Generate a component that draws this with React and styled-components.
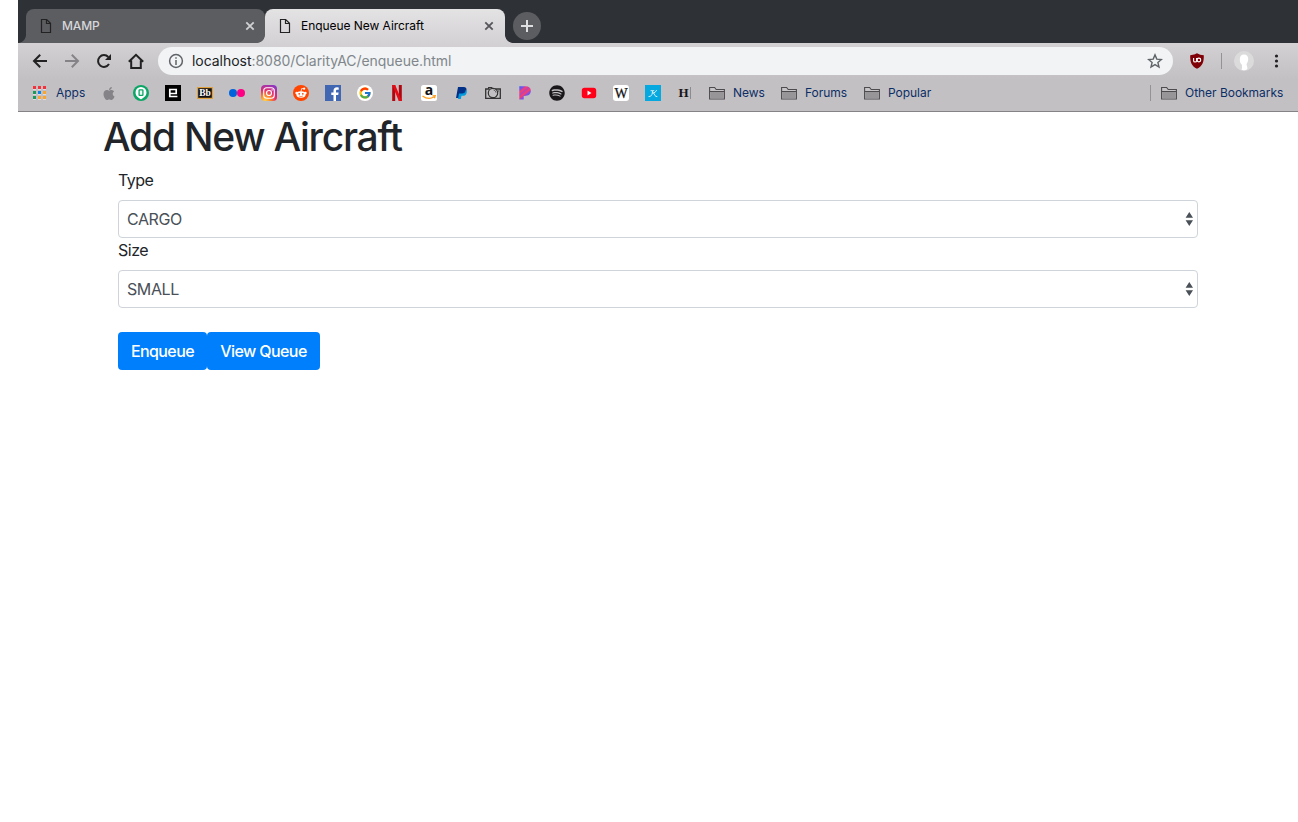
import React from "react";
import styled, { createGlobalStyle } from "styled-components";
import { FaApple, FaSpotify } from "react-icons/fa";
import { FcGoogle } from "react-icons/fc";

const GlobalStyle = createGlobalStyle`
  * { box-sizing: border-box; }
  body { margin: 0; background: #fff; font-family: Inter, "Liberation Sans", sans-serif; overflow: hidden; }
`;

const Window = styled.div`
  width: 1280px;
  height: 822px;
  margin-left: 18px;
  background: #fff;
`;

const TabStrip = styled.div`
  display: flex;
  height: 43px;
  padding: 9px 8px 0;
  background: #2e3136;
`;

const Tab = styled.div`
  position: relative;
  z-index: ${(p) => (p.$active ? 1 : 0)};
  display: flex;
  align-items: center;
  width: ${(p) => (p.$active ? 240 : 239)}px;
  height: 34px;
  padding: 0 ${(p) => (p.$active ? 9 : 8)}px 0 12px;
  border-radius: 8px 8px 0 0;
  font-size: 12px;
  font-weight: ${(p) => (p.$active ? 400 : 500)};
  letter-spacing: ${(p) => (p.$active ? "-0.05px" : "-0.15px")};
  color: ${(p) => (p.$active ? "#000" : "#d6d7d9")};
  background: ${(p) => (p.$active ? "linear-gradient(#e4e3e4, #d3d1d3)" : "#5c5d61")};

  &::before,
  &::after {
    content: "";
    position: absolute;
    bottom: 0;
    width: 8px;
    height: 8px;
  }
  &::before {
    left: -8px;
    background: radial-gradient(circle at 0 0, transparent 7.5px, ${(p) => (p.$active ? "#d3d1d3" : "#5c5d61")} 8.2px);
  }
  &::after {
    right: -8px;
    background: radial-gradient(circle at 100% 0, transparent 7.5px, ${(p) => (p.$active ? "#d3d1d3" : "#5c5d61")} 8.2px);
  }
`;

const TabTitle = styled.span`
  flex: 1;
  padding: 0 0 2px 8px;
  white-space: nowrap;
`;

const NewTab = styled.div`
  display: grid;
  place-items: center;
  width: 28px;
  height: 28px;
  margin: 3px 0 0 8px;
  border-radius: 50%;
  background: #5c5d61;
`;

const Bars = styled.div`
  height: 69px;
  border-bottom: 1px solid #858386;
  background: linear-gradient(#d3d1d3, #c3c0c3 36px, #c3c0c3);
`;

const Toolbar = styled.div`
  display: flex;
  align-items: center;
  height: 36px;
  padding-left: 12px;
`;

const NavButton = styled.div`
  display: grid;
  flex: none;
  place-items: center;
  width: 20px;
  height: 20px;
  margin-right: 12px;
`;

const Address = styled.div`
  display: flex;
  flex: none;
  align-items: center;
  width: 1015px;
  height: 28px;
  padding: 0 10px;
  border-radius: 14px;
  background: #f1f3f4;
`;

const Url = styled.span`
  flex: 1;
  padding: 0 0 2px 8px;
  font-size: 14px;
  letter-spacing: -0.04px;
  color: #80868b;
  white-space: nowrap;

  b {
    font-weight: 400;
    color: #202124;
  }
`;

const Extensions = styled.div`
  display: flex;
  align-items: center;
  padding-left: 16px;
`;

const Divider = styled.i`
  width: 1px;
  height: 16px;
  margin: ${(p) => p.$margin};
  background: #959296;
`;

const BookmarkBar = styled.div`
  display: flex;
  align-items: center;
  gap: 16px;
  height: 28px;
  padding: 0 15px 0 14px;
`;

const Bookmark = styled.div`
  display: flex;
  align-items: center;
  gap: 8px;
  height: 16px;

  svg {
    flex: none;
    display: block;
  }
`;

const BookmarkLabel = styled.span`
  width: ${(p) => p.$width}px;
  font-size: 12px;
  line-height: 16px;
  letter-spacing: -0.03px;
  color: #0c2e66;
  white-space: nowrap;
`;

const OtherGroup = styled.div`
  display: flex;
  align-items: center;
  margin-left: auto;
`;

const Page = styled.main`
  width: 1110px;
  margin-left: 85px;
  color: #212529;
`;

const Heading = styled.h1`
  margin: 0 0 8px;
  padding-top: 1px;
  height: 48px;
  font-size: 39px;
  line-height: 48px;
  font-weight: 500;
  font-variant-ligatures: none;
  letter-spacing: -1.25px;
  white-space: nowrap;
`;

const Form = styled.form`
  padding: 0 15px;
`;

const Label = styled.label`
  display: block;
  height: 24px;
  margin-bottom: 8px;
  font-size: 16px;
  line-height: 24px;
  letter-spacing: -0.5px;
`;

const SelectBox = styled.div`
  display: flex;
  align-items: center;
  height: 38px;
  padding: 0 4px 0 8px;
  border: 1px solid #ced4da;
  border-radius: 4px;
`;

const Select = styled.select`
  flex: 1;
  appearance: none;
  padding: 0;
  border: 0;
  background: transparent;
  font: 400 16px/24px Inter, sans-serif;
  letter-spacing: -0.4px;
  color: #495057;
`;

const Actions = styled.div`
  display: flex;
  padding-top: 24px;
`;

const Button = styled.button`
  width: ${(p) => p.$width}px;
  height: 38px;
  padding: 0;
  border: 0;
  border-radius: 4px;
  background: #007ffc;
  color: #fff;
  font: 500 16px/24px Inter, sans-serif;
  letter-spacing: -0.6px;
  white-space: nowrap;
`;

const PageIcon = () => (
  <svg width="16" height="16" viewBox="0 0 16 16" fill="none" stroke="#222">
    <path d="M3.500 1.500h5.200l3.800 3.800v9.200h-9zM8.500 1.500v4h4" strokeWidth="1.200" />
  </svg>
);

const CloseIcon = ({ color }) => (
  <svg width="14" height="14" viewBox="0 0 14 14" stroke={color} strokeWidth="1.8">
    <path d="M3.300 3.300l7.400 7.400M10.700 3.300l-7.400 7.400" />
  </svg>
);

const Nav = ({ d, color = "#222" }) => (
  <svg width="20" height="20" viewBox="0 0 20 20" fill="none" stroke={color} strokeWidth="2">
    <path d={d} />
  </svg>
);

const Glyph = ({ children }) => (
  <svg width="16" height="16" viewBox="0 0 16 16" overflow="visible">
    {children}
  </svg>
);

const Folder = () => (
  <Glyph>
    <path d="M.6 14V2.500h5l1.600 2h8.200V14z" fill="#c7c5c7" stroke="#4d4b4e" strokeWidth="1.100" />
    <path d="M1.200 7h13.600v6.400H1.200z" fill="#979598" />
    <path d="M.6 6.500h14.800" stroke="#4d4b4e" />
  </Glyph>
);

const APP_COLORS = ["#f5323b", "#f5323b", "#f5323b", "#1c9a5c", "#0a84e8", "#fba52d", "#1c9a5c", "#fba52d", "#fba52d"];

const AppsIcon = () => (
  <Glyph>
    {APP_COLORS.map((color, i) => (
      <g key={i}>
        <rect x={1 + (i % 3) * 5} y={1 + Math.floor(i / 3) * 5} width="3" height="4" fill="#dedcde" />
        <rect x={1 + (i % 3) * 5} y={1 + Math.floor(i / 3) * 5} width="3" height="3" fill={color} />
      </g>
    ))}
  </Glyph>
);

const SITES = [
  <FaApple size={15} color="#858387" style={{ width: 16 }} />,
  <Glyph>
    <circle cx="8" cy="8" r="8" fill="#0ba566" />
    <path d="M8 2a5.500 5.500 0 0 1 5.500 5.500c0 3.800-3.300 5.200-5.500 7-2.200-1.800-5.500-3.200-5.500-7A5.500 5.500 0 0 1 8 2z" fill="#fff" />
    <rect x="6.100" y="4.800" width="3.800" height="5.600" rx=".5" fill="#e8fff4" stroke="#0ba566" strokeWidth="1.300" />
  </Glyph>,
  <Glyph>
    <path d="M0 0h16v16H0z" fill="#000" />
    <path d="M12.400 11.500H4.800V4.500h6.400v4H5" fill="none" stroke="#fff" strokeWidth="1.700" />
  </Glyph>,
  <Glyph>
    <rect x=".6" y="2.600" width="14.800" height="10.800" fill="#111" stroke="#dfa13e" strokeWidth="1.200" />
    <text x="8" y="11.300" textAnchor="middle" fontFamily="Liberation Serif, serif" fontSize="9.500" fontWeight="700" fill="#fff">Bb</text>
  </Glyph>,
  <Glyph>
    <circle cx="4" cy="8" r="4" fill="#0063dc" />
    <circle cx="12" cy="8" r="4" fill="#ff0084" />
  </Glyph>,
  <Glyph>
    <defs>
      <radialGradient id="insta" cx=".25" cy="1" r="1.15">
        <stop offset="0" stopColor="#ffd64f" />
        <stop offset=".3" stopColor="#fb8b2d" />
        <stop offset=".6" stopColor="#e22b70" />
        <stop offset="1" stopColor="#8138cb" />
      </radialGradient>
    </defs>
    <rect width="16" height="16" rx="4" fill="url(#insta)" />
    <rect x="2.700" y="2.700" width="10.600" height="10.600" rx="3" fill="none" stroke="#fff" strokeWidth="1.100" />
    <circle cx="8" cy="8" r="2.500" fill="none" stroke="#fff" strokeWidth="1.200" />
    <circle cx="11.100" cy="4.900" r=".7" fill="#fff" />
  </Glyph>,
  <Glyph>
    <circle cx="8" cy="8" r="8" fill="#ff4500" />
    <ellipse cx="8" cy="9.500" rx="4.600" ry="3.300" fill="#fff" />
    <circle cx="3.600" cy="8" r="1.300" fill="#fff" />
    <circle cx="12.400" cy="8" r="1.300" fill="#fff" />
    <circle cx="11.200" cy="3.700" r="1.100" fill="#fff" />
    <path d="M8 6.500l.7-3 2.500.4" stroke="#fff" strokeWidth=".8" fill="none" />
    <circle cx="6.200" cy="8.800" r=".9" fill="#ff4500" />
    <circle cx="9.800" cy="8.800" r=".9" fill="#ff4500" />
    <path d="M6 11q2 1.200 4 0" stroke="#ff4500" strokeWidth=".6" fill="none" />
  </Glyph>,
  <Glyph>
    <path d="M0 0h16v16H0z" fill="#4267b2" />
    <path d="M11 16v-6h2.200l.4-2.500H11V6c0-.8.300-1.300 1.400-1.300h1.300V2.400L12 2.300C9.800 2.300 8.500 3.600 8.500 5.800v1.700H6.300V10h2.200v6z" fill="#fff" />
  </Glyph>,
  <Glyph>
    <circle cx="8" cy="8" r="8" fill="#fff" />
    <FcGoogle x="1.300" y="1.300" size={13.4} />
  </Glyph>,
  <Glyph>
    <path d="M3.200 0h3v16h-3zM9.800 0h3v16h-3z" fill="#b1060f" />
    <path d="M3.200 0h3l6.600 16h-3z" fill="#e50914" />
  </Glyph>,
  <Glyph>
    <rect width="16" height="16" rx="2.500" fill="#fff" />
    <text x="8" y="10" textAnchor="middle" fontFamily="Open Sans, sans-serif" fontSize="14" fontWeight="700" fill="#111">a</text>
    <path d="M1.500 11q5.900 4.200 11.300 1M11.500 10.800l2.700-.1-.8 2.500" fill="none" stroke="#ff9d1c" strokeWidth="1.300" />
  </Glyph>,
  <Glyph>
    <path d="M5 2h5.500c2.500 0 3.400 1.400 2.900 3.500-.5 2.400-2 3.400-4.400 3.400H7.300L6.400 13H3z" fill="#003087" />
    <path d="M12.800 4.700c1.100.8 1.200 2 .8 3.200-.5 2-1.900 2.900-4 2.900H8.500L7.800 14H5l1-5.400h3c2.200 0 3.400-1.400 3.800-3.900z" fill="#009cde" />
  </Glyph>,
  <Glyph>
    <path d="M.7 4h3V2.700h3V4h8.600v9.400H.7z" fill="none" stroke="#333" strokeWidth="1.300" />
    <circle cx="8" cy="8" r="4.700" fill="#c3c0c3" stroke="#333" strokeWidth="1.200" />
    <path d="M8.500 5a3 3 0 0 1 2.500 2.700" fill="none" stroke="#444" strokeWidth=".7" />
    <path d="M13 6h1" stroke="#333" />
  </Glyph>,
  <Glyph>
    <defs>
      <linearGradient id="pandora" x1="0" y1="0" x2=".7" y2="1">
        <stop offset="0" stopColor="#3265ff" />
        <stop offset=".2" stopColor="#8a4bdc" />
        <stop offset=".32" stopColor="#ff3c68" />
        <stop offset=".45" stopColor="#b444ba" />
        <stop offset=".58" stopColor="#ff3c68" />
        <stop offset=".72" stopColor="#8a4bdc" />
        <stop offset="1" stopColor="#2f73f6" />
      </linearGradient>
    </defs>
    <path d="M2.300 1.300h6.200c3.400 0 5.300 1.700 5.300 4.500 0 3.400-2.400 5.200-6 5.200H6.700v3.600H2.300z" fill="url(#pandora)" />
  </Glyph>,
  <FaSpotify size={16} color="#191719" />,
  <Glyph>
    <rect x=".8" y="2.700" width="14.400" height="10.600" rx="2.700" fill="#ff0018" />
    <path d="M6.500 5.500L10.500 8l-4 2.500z" fill="#fff" />
  </Glyph>,
  <Glyph>
    <rect width="16" height="16" rx="3" fill="#fff" />
    <text x="8" y="12.800" textAnchor="middle" fontFamily="Liberation Serif, serif" fontSize="14" fill="#111" stroke="#111" strokeWidth=".25">W</text>
  </Glyph>,
  <Glyph>
    <path d="M0 0h16v16H0z" fill="#05a9df" />
    <path d="M3.500 11.600q2.500.3 3.500-2.200l.7-3.700H5.500M7.700 5.700h1.600M7.400 8.100q3 .2 4.300-3M8.500 7.900l1.600 2.800q.5.900 2.200.9" fill="none" stroke="#fff" strokeWidth=".8" />
  </Glyph>,
  <Glyph>
    <text x="1.500" y="12" fontFamily="Liberation Serif, serif" fontSize="13" fontWeight="700" fill="#171517">H</text>
    <path d="M13.500 2v12" stroke="#8e8b8f" />
  </Glyph>,
];

const FOLDERS = [
  { label: "News", width: 32 },
  { label: "Forums", width: 43 },
  { label: "Popular", width: 43 },
];

const Field = ({ label, value }) => (
  <>
    <Label>{label}</Label>
    <SelectBox>
      <Select defaultValue={value}>
        <option>{value}</option>
      </Select>
      <svg width="8" height="16" viewBox="0 0 8 16" fill="#495057">
        <path d="M4.300 1l3.700 5.700H.6zM4.300 15l3.700-5.700H.6z" />
      </svg>
    </SelectBox>
  </>
);

export default function App() {
  return (
    <>
      <GlobalStyle />
      <Window>
        <TabStrip>
          <Tab>
            <PageIcon />
            <TabTitle>MAMP</TabTitle>
            <CloseIcon color="#d0d1d3" />
          </Tab>
          <Tab $active>
            <PageIcon />
            <TabTitle>Enqueue New Aircraft</TabTitle>
            <CloseIcon color="#55555a" />
          </Tab>
          <NewTab>
            <svg width="14" height="14" viewBox="0 0 14 14" stroke="#dedfe0" strokeWidth="2">
              <path d="M7 1v12M1 7h12" />
            </svg>
          </NewTab>
        </TabStrip>
        <Bars>
          <Toolbar>
            <NavButton><Nav d="M17 10H4.500M10.200 3.800L4 10l6.200 6.200" /></NavButton>
            <NavButton><Nav color="#858387" d="M3 10h12.500M9.800 3.800L16 10l-6.200 6.200" /></NavButton>
            <NavButton>
              <svg width="20" height="20" viewBox="0 0 20 20">
                <path d="M15 13.100A5.900 5.900 0 1 1 14.300 6" fill="none" stroke="#222" strokeWidth="2" />
                <path d="M17 3v6h-6z" fill="#222" />
              </svg>
            </NavButton>
            <NavButton><Nav d="M2.800 10.800L10 3.800l7.200 7M5.200 9.500V17h9.600V9.500" /></NavButton>
            <Address>
              <svg width="16" height="16" viewBox="0 0 16 16" fill="none" stroke="#5f6368" strokeWidth="1.500">
                <circle cx="8" cy="8" r="6.400" />
                <path d="M8 7.100V12M8 4.200v1.500" />
              </svg>
              <Url><b>localhost</b>:8080/ClarityAC/enqueue.html</Url>
              <svg width="16" height="16" viewBox="0 0 16 16" fill="none" stroke="#5f6368" strokeWidth="1.400">
                <path d="M8 1.900l1.800 4.200 4.600.4-3.500 3 1.100 4.500L8 11.600 4 14l1.100-4.500-3.500-3 4.600-.4z" />
              </svg>
            </Address>
            <Extensions>
              <svg width="16" height="16" viewBox="0 0 16 16">
                <path d="M8 .2q3 1.800 6.800 2c.2 6.600-1.200 10.800-6.800 13.600C2.400 13 1 8.800 1.200 2.200 5 2 8 .2 8 .2z" fill="#800008" />
                <path d="M4.600 5v2.700q0 1.300 1.500 1.300t1.500-1.300V5" fill="none" stroke="#fff" strokeWidth="1.100" />
                <circle cx="9.900" cy="7" r="1.800" fill="none" stroke="#fff" strokeWidth="1.200" />
              </svg>
              <Divider $margin="0 12px 0 16px" />
              <svg width="20" height="20" viewBox="0 0 20 20">
                <circle cx="10" cy="10" r="10" fill="#dcdbdc" />
                <path d="M10 3.500c3 0 4.500 2 4.200 5-.2 2.200-1 3.600-1.700 4.700.2 2.300 1.700 3.700.5 5.300-1.700.9-4 .9-5.500.2.700-1.700.7-3.500.2-5.200C6.200 12.300 5.800 10.500 5.800 8.500c-.1-3.100 1.400-5 4.200-5z" fill="#fff" />
              </svg>
              <svg width="44" height="16" viewBox="0 0 44 16" fill="#222">
                <circle cx="22.500" cy="3" r="1.600" />
                <circle cx="22.500" cy="8" r="1.600" />
                <circle cx="22.500" cy="13" r="1.600" />
              </svg>
            </Extensions>
          </Toolbar>
          <BookmarkBar>
            <Bookmark>
              <AppsIcon />
              <BookmarkLabel $width={29}>Apps</BookmarkLabel>
            </Bookmark>
            {SITES.map((icon, i) => (
              <Bookmark key={i}>{icon}</Bookmark>
            ))}
            {FOLDERS.map((f) => (
              <Bookmark key={f.label}>
                <Folder />
                <BookmarkLabel $width={f.width}>{f.label}</BookmarkLabel>
              </Bookmark>
            ))}
            <OtherGroup>
              <Divider $margin="0 10px 0 0" />
              <Bookmark>
                <Folder />
                <BookmarkLabel $width={98}>Other Bookmarks</BookmarkLabel>
              </Bookmark>
            </OtherGroup>
          </BookmarkBar>
        </Bars>
        <Page>
          <Heading>Add New Aircraft</Heading>
          <Form>
            <Field label="Type" value="CARGO" />
            <Field label="Size" value="SMALL" />
            <Actions>
              <Button type="button" $width={89}>Enqueue</Button>
              <Button type="button" $width={113}>View Queue</Button>
            </Actions>
          </Form>
        </Page>
      </Window>
    </>
  );
}
